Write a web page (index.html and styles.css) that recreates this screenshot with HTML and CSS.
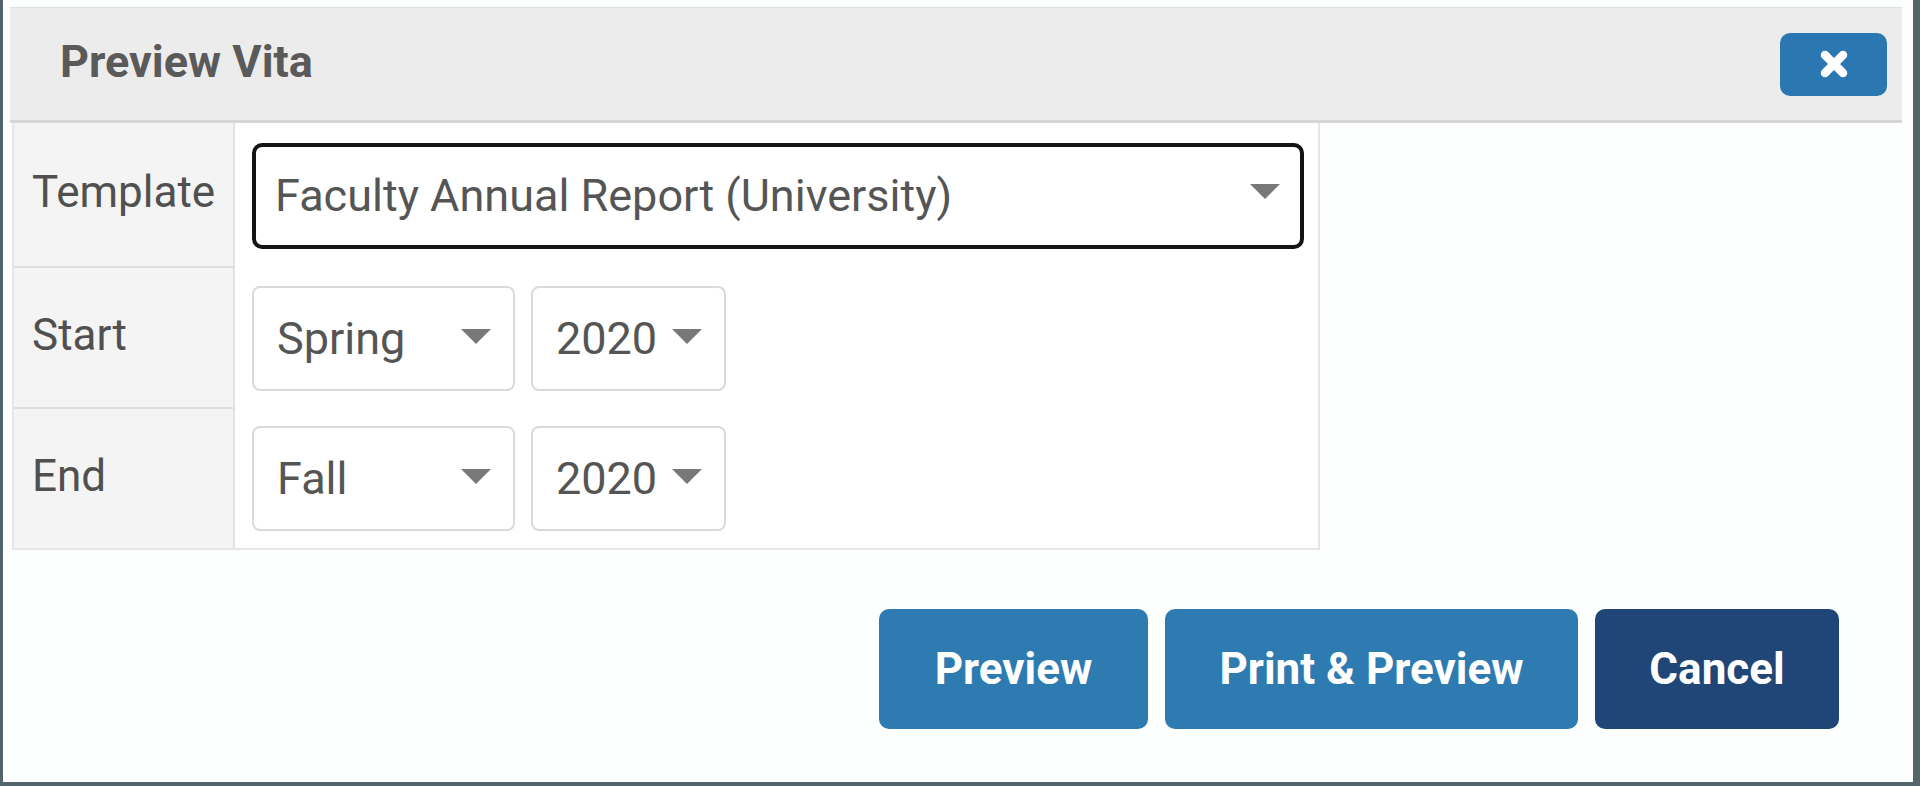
FILE: index.html
```html
<!DOCTYPE html>
<html>
<head>
<meta charset="utf-8">
<link rel="stylesheet" href="styles.css">
</head>
<body>
<div class="dialog">
  <div class="header">
    <h1 class="title">Preview Vita</h1>
    <button class="close" aria-label="Close">
      <svg width="32" height="32" viewBox="0 0 32 32"><path d="M7 7 L25 25 M25 7 L7 25" stroke="#fff" stroke-width="8.5" stroke-linecap="round"/></svg>
    </button>
  </div>
  <div class="form">
    <div class="label">Template</div>
    <div class="field">
      <div class="select select-wide focused"><span>Faculty Annual Report (University)</span><i class="arrow"></i></div>
    </div>
    <div class="label">Start</div>
    <div class="field">
      <div class="select select-term"><span>Spring</span><i class="arrow"></i></div>
      <div class="select select-year"><span>2020</span><i class="arrow"></i></div>
    </div>
    <div class="label last">End</div>
    <div class="field last">
      <div class="select select-term"><span>Fall</span><i class="arrow"></i></div>
      <div class="select select-year"><span>2020</span><i class="arrow"></i></div>
    </div>
  </div>
  <div class="footer">
    <button class="btn btn-primary btn-preview">Preview</button>
    <button class="btn btn-primary btn-print">Print &amp; Preview</button>
    <button class="btn btn-dark btn-cancel">Cancel</button>
  </div>
</div>
</body>
</html>
```

FILE: styles.css
```css
* { box-sizing: border-box; }
html, body {
  margin: 0;
  padding: 0;
  background: #ffffff;
  font-family: Roboto, "Liberation Sans", sans-serif;
}
.dialog {
  width: 1920px;
  height: 786px;
  border-left: 3px solid #53646b;
  border-right: 7px solid #53646b;
  border-bottom: 4px solid #53646b;
  background: #fdfefe;
  padding-top: 7px;
}
.header {
  margin: 0 11px 0 7px;
  height: 116px;
  background: #ececec;
  border-top: 1px solid #e0e0e0;
  border-bottom: 3px solid #d6d6d6;
  display: flex;
  align-items: center;
  justify-content: space-between;
  padding: 0 15px 0 50px;
}
.title {
  margin: 0;
  font-size: 45px;
  font-weight: 700;
  color: #5a5a5a;
  line-height: 1;
  position: relative;
  top: -3px;
}
.close {
  width: 107px;
  height: 63px;
  border: none;
  border-radius: 10px;
  background: #2b77b1;
  display: flex;
  align-items: center;
  justify-content: center;
  padding: 0;
}
.form {
  margin-left: 9px;
  width: 1308px;
  display: grid;
  grid-template-columns: 221px 1087px;
  grid-template-rows: 145px 141px 139px;
  border: 2px solid #e6e6e6;
  border-top: none;
  background: #ffffff;
}
.label {
  background: #f4f4f4;
  border-right: 2px solid #e2e2e2;
  border-bottom: 2px solid #dedede;
  display: flex;
  align-items: center;
  padding-left: 18px;
  padding-bottom: 6px;
  font-size: 44px;
  color: #505050;
}
.label.last, .field.last { border-bottom: none; }
.field {
  display: flex;
  align-items: center;
  gap: 16px;
  padding-left: 17px;
}
.select {
  position: relative;
  display: flex;
  align-items: center;
  background: #fff;
  font-size: 45px;
  color: #555;
  height: 105px;
  border: 2px solid #dadada;
  border-radius: 8px;
}
.select-wide {
  width: 1052px;
  height: 106px;
  border: 4px solid #141414;
  border-radius: 10px;
  padding-left: 19px;
}
.select-term { width: 263px; padding-left: 23px; }
.select-year { width: 195px; padding-left: 23px; }
.arrow {
  position: absolute;
  right: 22px;
  top: 50%;
  margin-top: -10px;
  width: 0;
  height: 0;
  border-left: 15px solid transparent;
  border-right: 15px solid transparent;
  border-top: 15px solid #787878;
}
.select-wide .arrow { right: 20px; margin-top: -12px; }
.footer {
  display: flex;
  justify-content: flex-end;
  gap: 17px;
  margin-top: 59px;
  padding-right: 74px;
}
.btn {
  height: 120px;
  border: none;
  border-radius: 10px;
  color: #ffffff;
  font-family: Roboto, "Liberation Sans", sans-serif;
  font-weight: 700;
  font-size: 44px;
  padding: 0;
}
.btn-primary { background: #2d7bb1; }
.btn-dark { background: #1f4677; }
.btn-preview { width: 269px; }
.btn-print { width: 413px; }
.btn-cancel { width: 244px; }
```
